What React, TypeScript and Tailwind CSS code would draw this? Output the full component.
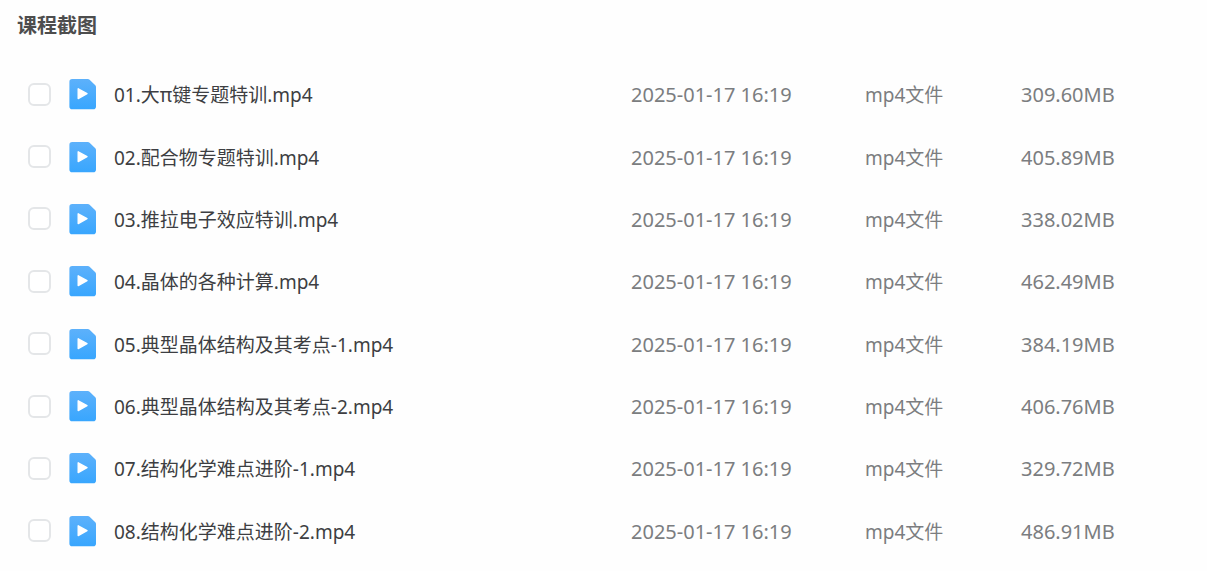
import * as React from "react";

interface CourseFile {
  name: string;
  modified: string;
  type: string;
  size: string;
}

const files: CourseFile[] = [
  { name: "01.大π键专题特训.mp4", modified: "2025-01-17 16:19", type: "mp4文件", size: "309.60MB" },
  { name: "02.配合物专题特训.mp4", modified: "2025-01-17 16:19", type: "mp4文件", size: "405.89MB" },
  { name: "03.推拉电子效应特训.mp4", modified: "2025-01-17 16:19", type: "mp4文件", size: "338.02MB" },
  { name: "04.晶体的各种计算.mp4", modified: "2025-01-17 16:19", type: "mp4文件", size: "462.49MB" },
  { name: "05.典型晶体结构及其考点-1.mp4", modified: "2025-01-17 16:19", type: "mp4文件", size: "384.19MB" },
  { name: "06.典型晶体结构及其考点-2.mp4", modified: "2025-01-17 16:19", type: "mp4文件", size: "406.76MB" },
  { name: "07.结构化学难点进阶-1.mp4", modified: "2025-01-17 16:19", type: "mp4文件", size: "329.72MB" },
  { name: "08.结构化学难点进阶-2.mp4", modified: "2025-01-17 16:19", type: "mp4文件", size: "486.91MB" },
];

function VideoIcon() {
  return (
    <svg className="h-8 w-7 shrink-0" viewBox="0 0 28 32" fill="none" aria-hidden="true">
      <defs>
        <linearGradient id="video-file" x1="0" y1="0" x2="0" y2="1">
          <stop offset="0%" stopColor="#5DB1FB" />
          <stop offset="100%" stopColor="#38A6FE" />
        </linearGradient>
      </defs>
      <path
        d="M3.2 0H18.8c.7 0 1.3.3 1.8.7l5.7 5.5c.4.4.7 1 .7 1.7v19.5a2.8 2.8 0 0 1-2.8 2.8H3.2A2.8 2.8 0 0 1 .4 27.4V2.8A2.8 2.8 0 0 1 3.2 0z"
        fill="url(#video-file)"
      />
      <path d="M9.2 9.8v9.8L18 14.7z" fill="#fff" stroke="#fff" strokeWidth="1.4" strokeLinejoin="round" />
    </svg>
  );
}

export default function App() {
  const [selected, setSelected] = React.useState<string[]>([]);

  const toggle = (name: string) =>
    setSelected((prev) => (prev.includes(name) ? prev.filter((n) => n !== name) : [...prev, name]));

  return (
    <main className="min-h-screen bg-[#fefefe] font-['Noto_Sans','Noto_Sans_CJK_SC',sans-serif]">
      <h1 className="px-[17px] pt-3 text-xl leading-7 font-bold text-[#4d4d4d]">课程截图</h1>

      <table className="mt-6 h-[499px] w-full table-fixed text-left whitespace-nowrap">
        <colgroup>
          <col className="w-[69px]" />
          <col />
          <col className="w-[234px]" />
          <col className="w-[156px]" />
          <col className="w-[186px]" />
        </colgroup>
        <tbody>
          {files.map((file, i) => (
            <tr key={file.name}>
              <td className="pb-0.5 pl-7">
                <input
                  id={`file-${i}`}
                  type="checkbox"
                  checked={selected.includes(file.name)}
                  onChange={() => toggle(file.name)}
                  className="block size-[23px] appearance-none rounded-md border-2 border-[#e4e6e8] bg-white checked:border-[#38a6fe] checked:bg-[#38a6fe]"
                />
              </td>
              <td>
                <label htmlFor={`file-${i}`} className="flex items-center gap-[17px] text-[19px] leading-7 text-[#3d3e42]">
                  <VideoIcon />
                  {file.name}
                </label>
              </td>
              <td className="text-xl leading-7 text-[#7b7d80]">{file.modified}</td>
              <td className="text-[19px] leading-7 text-[#7b7d80]">{file.type}</td>
              <td className="text-xl leading-7 text-[#7b7d80]">{file.size}</td>
            </tr>
          ))}
        </tbody>
      </table>
    </main>
  );
}
